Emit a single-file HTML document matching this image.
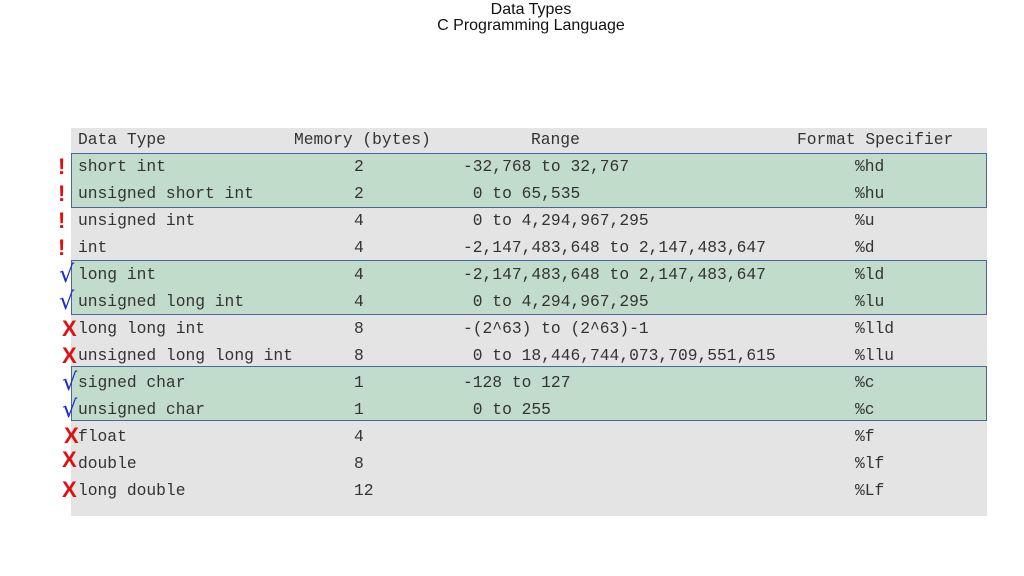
<!DOCTYPE html>
<html><head><meta charset="utf-8"><style>
body{margin:0;width:1024px;height:576px;background:#fff;position:relative;overflow:hidden;font-family:"Liberation Sans",sans-serif}
.t{position:absolute;left:0;width:1062px;text-align:center;font-size:16px;color:#111;line-height:16px}
.tbl{position:absolute;left:71px;top:128px;width:916px;height:388px;background:#e4e4e4}
.g{position:absolute;left:71px;width:914px;height:53px;background:#c2dccb;border:1px solid #4a64a4}
.r{position:absolute;font-family:"Liberation Mono",monospace;font-size:16.3px;color:#333;line-height:18px;white-space:pre}
.m{position:absolute;font-weight:bold;line-height:20px}
.ex{color:#e01010;font-size:22px;font-family:"Liberation Sans",sans-serif}
.ck{color:#1a2ad0;font-size:24px;font-family:"DejaVu Sans",sans-serif;font-weight:normal}
.x{color:#e01010;font-size:22px;font-family:"Liberation Sans",sans-serif}
</style></head><body>
<div class="t" style="top:2px">Data Types</div>
<div class="t" style="top:18px">C Programming Language</div>
<div class="tbl"></div>
<div class="g" style="top:153px"></div>
<div class="g" style="top:260px"></div>
<div class="g" style="top:366px"></div>
<div id="rows"></div>
<div class="r" style="left:78px;top:131px">Data Type</div>
<div class="r" style="left:294px;top:131px">Memory (bytes)</div>
<div class="r" style="left:531px;top:131px">Range</div>
<div class="r" style="left:797px;top:131px">Format Specifier</div>

<div class="r" style="left:78px;top:158px">short int</div><div class="r" style="left:354px;top:158px">2</div><div class="r" style="left:463px;top:158px">-32,768 to 32,767</div><div class="r" style="left:855px;top:158px">%hd</div>
<div class="r" style="left:78px;top:185px">unsigned short int</div><div class="r" style="left:354px;top:185px">2</div><div class="r" style="left:463px;top:185px"> 0 to 65,535</div><div class="r" style="left:855px;top:185px">%hu</div>
<div class="r" style="left:78px;top:212px">unsigned int</div><div class="r" style="left:354px;top:212px">4</div><div class="r" style="left:463px;top:212px"> 0 to 4,294,967,295</div><div class="r" style="left:855px;top:212px">%u</div>
<div class="r" style="left:78px;top:239px">int</div><div class="r" style="left:354px;top:239px">4</div><div class="r" style="left:463px;top:239px">-2,147,483,648 to 2,147,483,647</div><div class="r" style="left:855px;top:239px">%d</div>
<div class="r" style="left:78px;top:266px">long int</div><div class="r" style="left:354px;top:266px">4</div><div class="r" style="left:463px;top:266px">-2,147,483,648 to 2,147,483,647</div><div class="r" style="left:855px;top:266px">%ld</div>
<div class="r" style="left:78px;top:293px">unsigned long int</div><div class="r" style="left:354px;top:293px">4</div><div class="r" style="left:463px;top:293px"> 0 to 4,294,967,295</div><div class="r" style="left:855px;top:293px">%lu</div>
<div class="r" style="left:78px;top:320px">long long int</div><div class="r" style="left:354px;top:320px">8</div><div class="r" style="left:463px;top:320px">-(2^63) to (2^63)-1</div><div class="r" style="left:855px;top:320px">%lld</div>
<div class="r" style="left:78px;top:347px">unsigned long long int</div><div class="r" style="left:354px;top:347px">8</div><div class="r" style="left:463px;top:347px"> 0 to 18,446,744,073,709,551,615</div><div class="r" style="left:855px;top:347px">%llu</div>
<div class="r" style="left:78px;top:374px">signed char</div><div class="r" style="left:354px;top:374px">1</div><div class="r" style="left:463px;top:374px">-128 to 127</div><div class="r" style="left:855px;top:374px">%c</div>
<div class="r" style="left:78px;top:401px">unsigned char</div><div class="r" style="left:354px;top:401px">1</div><div class="r" style="left:463px;top:401px"> 0 to 255</div><div class="r" style="left:855px;top:401px">%c</div>
<div class="r" style="left:78px;top:428px">float</div><div class="r" style="left:354px;top:428px">4</div><div class="r" style="left:855px;top:428px">%f</div>
<div class="r" style="left:78px;top:455px">double</div><div class="r" style="left:354px;top:455px">8</div><div class="r" style="left:855px;top:455px">%lf</div>
<div class="r" style="left:78px;top:482px">long double</div><div class="r" style="left:354px;top:482px">12</div><div class="r" style="left:855px;top:482px">%Lf</div>

<div class="m ex" style="left:58px;top:157px">!</div>
<div class="m ex" style="left:58px;top:184px">!</div>
<div class="m ex" style="left:58px;top:211px">!</div>
<div class="m ex" style="left:58px;top:238px">!</div>
<div class="m ck" style="left:59px;top:264px">√</div>
<div class="m ck" style="left:59px;top:291px">√</div>
<div class="m x" style="left:62px;top:319px">X</div>
<div class="m x" style="left:62px;top:346px">X</div>
<div class="m ck" style="left:62px;top:372px">√</div>
<div class="m ck" style="left:62px;top:399px">√</div>
<div class="m x" style="left:64px;top:426px">X</div>
<div class="m x" style="left:62px;top:450px">X</div>
<div class="m x" style="left:62px;top:480px">X</div>
</body></html>
